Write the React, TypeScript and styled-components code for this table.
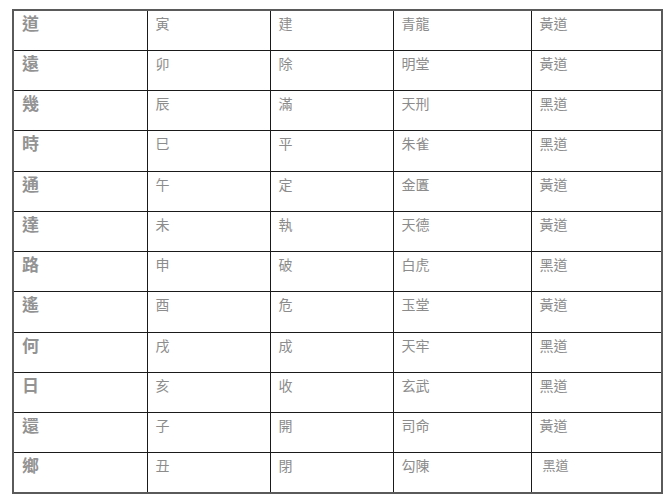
import React from 'react';
import styled, { createGlobalStyle } from 'styled-components';

const GlobalStyle = createGlobalStyle`
  html, body {
    margin: 0;
    padding: 0;
    background: #ffffff;
  }
`;

const Page = styled.div`
  padding: 9px 0 0 12px;
`;

const Table = styled.table`
  width: 651px;
  height: 485px;
  border-collapse: collapse;
  table-layout: fixed;
  border: 2px solid #5a5a5a;
`;

const Row = styled.tr`
  height: 40.25px;
`;

const Cell = styled.td<{ $head?: boolean; $small?: boolean }>`
  border: 1.5px solid #1a1a1a;
  padding: 1px 8px 0;
  vertical-align: top;
  font-family: ${(p) =>
    p.$head
      ? '"Noto Sans CJK TC", "Noto Sans CJK SC", serif'
      : '"Noto Sans CJK TC", "Noto Sans CJK SC", sans-serif'};
  font-size: ${(p) => (p.$head ? '17px' : p.$small ? '13px' : '14px')};
  font-weight: ${(p) => (p.$head ? 700 : 400)};
  color: ${(p) => (p.$head ? '#939393' : '#8c8c8c')};
  line-height: 22px;
  padding-left: ${(p) => (p.$small ? '11px' : '8px')};
`;

const widths = [134, 123, 123, 138, 131];

const rows: string[][] = [
  ['道', '寅', '建', '青龍', '黃道'],
  ['遠', '卯', '除', '明堂', '黃道'],
  ['幾', '辰', '滿', '天刑', '黑道'],
  ['時', '巳', '平', '朱雀', '黑道'],
  ['通', '午', '定', '金匱', '黃道'],
  ['達', '未', '執', '天德', '黃道'],
  ['路', '申', '破', '白虎', '黑道'],
  ['遙', '酉', '危', '玉堂', '黃道'],
  ['何', '戌', '成', '天牢', '黑道'],
  ['日', '亥', '收', '玄武', '黑道'],
  ['還', '子', '開', '司命', '黃道'],
  ['鄉', '丑', '閉', '勾陳', '黑道'],
];

const App: React.FC = () => (
  <>
    <GlobalStyle />
    <Page>
      <Table>
        <colgroup>
          {widths.map((w, i) => (
            <col key={i} style={{ width: w }} />
          ))}
        </colgroup>
        <tbody>
          {rows.map((r, ri) => (
            <Row key={ri}>
              {r.map((c, ci) => (
                <Cell
                  key={ci}
                  $head={ci === 0}
                  $small={ri === rows.length - 1 && ci === 4}
                >
                  {c}
                </Cell>
              ))}
            </Row>
          ))}
        </tbody>
      </Table>
    </Page>
  </>
);

export default App;
